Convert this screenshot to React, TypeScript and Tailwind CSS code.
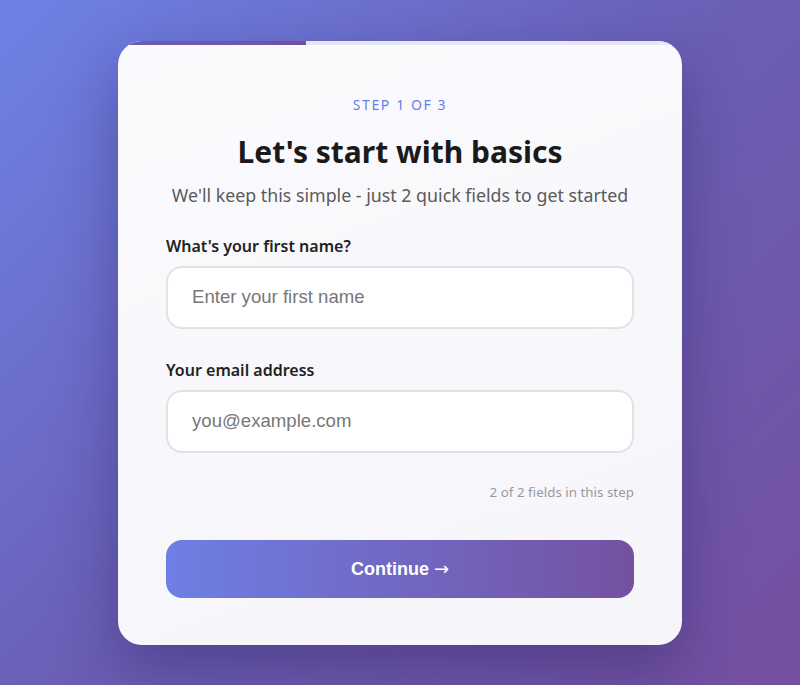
import React from 'react';

const fields = [
  { label: "What's your first name?", placeholder: 'Enter your first name', type: 'text' },
  { label: 'Your email address', placeholder: 'you@example.com', type: 'email' },
];

export default function App() {
  return (
    <div className="w-full h-[685px] flex items-center justify-center bg-[linear-gradient(135deg,#6e82e6_0%,#6a5fb5_50%,#744fa0_100%)] font-['Noto_Sans',sans-serif]">
      <div className="relative w-[564px] h-[604px] rounded-[24px] overflow-hidden bg-[linear-gradient(160deg,#fbfbfe_0%,#f5f5fa_100%)] shadow-[0_24px_60px_rgba(30,20,80,0.35)] px-12 pt-[54px]">
        {/* progress track */}
        <div className="absolute top-0 left-0 right-0 h-[4px] bg-[#e6e6f4]">
          <div className="h-full w-1/3 bg-[linear-gradient(90deg,#6a5fb5,#744fa0)]" />
        </div>

        <p className="text-center text-[14px] leading-5 tracking-[1.6px] text-[#667eea]">STEP 1 OF 3</p>
        <h1 className="mt-[18px] text-center text-[30px] leading-[38px] font-bold text-[#1a1a1a]">Let's start with basics</h1>
        <p className="mt-[11px] text-center text-[17.8px] leading-[27px] text-[#5a5a5a]">
          We'll keep this simple - just 2 quick fields to get started
        </p>

        <div className="mt-[25px] flex flex-col gap-[29px]">
          {fields.map((f) => (
            <div key={f.label}>
              <label className="block text-[16px] leading-6 font-semibold text-[#222]">{f.label}</label>
              <input
                type={f.type}
                placeholder={f.placeholder}
                className="mt-[8px] w-full h-[63px] rounded-[16px] border-2 border-[#e1e1e6] bg-white px-6 text-[18.6px] font-['Liberation_Sans',Arial,sans-serif] text-[#333] placeholder:text-[#777] outline-none"
              />
            </div>
          ))}
        </div>

        <p className="mt-[29px] text-right text-[13.4px] leading-5 text-[#9a9a9a]">2 of 2 fields in this step</p>

        <button className="mt-[38px] w-full h-[58px] rounded-[16px] bg-[linear-gradient(90deg,#6e7fe4,#7451a1)] text-white text-[18px] font-bold font-['Liberation_Sans',Arial,sans-serif]">
          Continue <span className="font-['DejaVu_Sans',sans-serif] font-normal">→</span>
        </button>
      </div>
    </div>
  );
}
